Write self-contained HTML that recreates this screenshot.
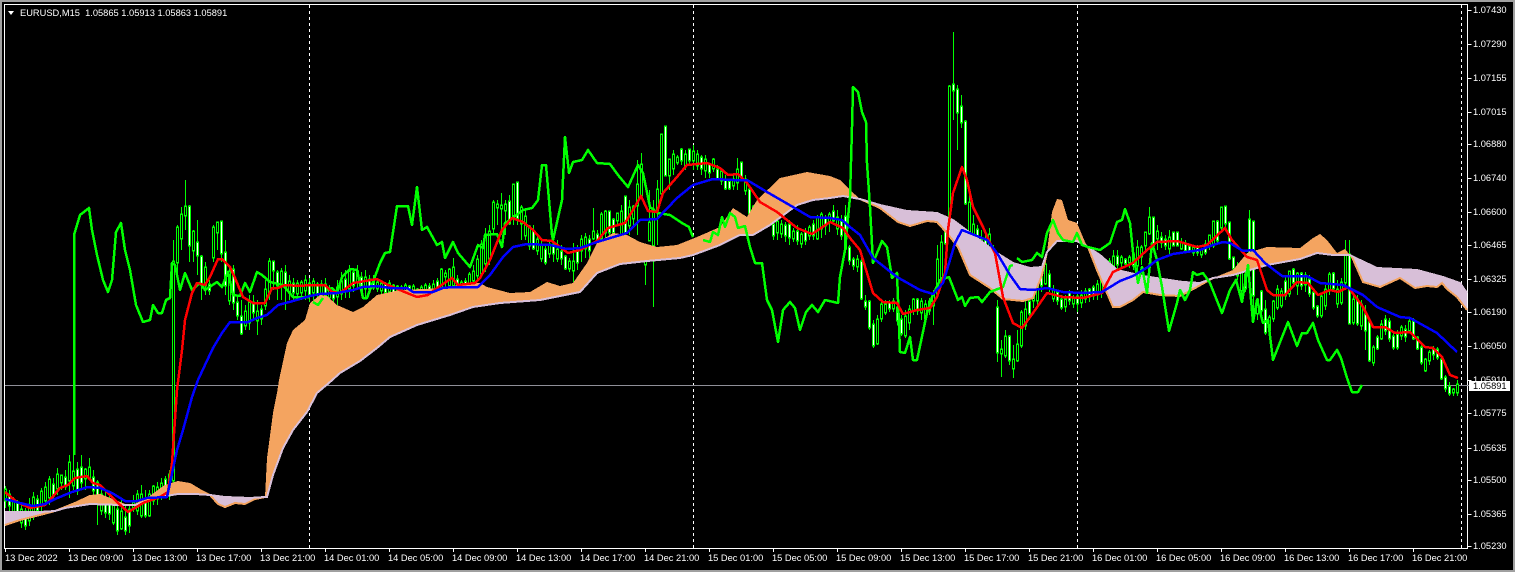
<!DOCTYPE html>
<html><head><meta charset="utf-8"><title>EURUSD,M15</title>
<style>html,body{margin:0;padding:0;background:#a0a0a0;width:1515px;height:572px;overflow:hidden}svg{display:block}text{font-family:"Liberation Sans",sans-serif;font-size:9.3px;fill:#fff}</style></head><body>
<svg width="1515" height="572" viewBox="0 0 1515 572" xmlns="http://www.w3.org/2000/svg">
<rect x="2" y="2" width="1511" height="568" fill="#000"/>
<rect x="4.5" y="4.5" width="1463" height="544" fill="none" stroke="#fff"/>
<g stroke="#fff" stroke-dasharray="3 3" shape-rendering="crispEdges"><path d="M309.5 5V548M693.5 5V548M1077.5 5V548M1461.5 5V548"/></g>
<path d="M5 385.5H1467" stroke="#8f8f98" shape-rendering="crispEdges"/>
<defs>
<path id="w" d="M9 495V505M17 504V515M25 512V525M37 500V510M53 485V495M65 478V486M77 470V490M81 468V482M93 478V490M97 483V495M105 500V512M109 505V513M117 510V530M125 518V530M129 510V525M145 500V515M165 480V492M189 207V245M197 243V255M201 257V283M209 285V290M221 222V253M225 253V285M233 270V302M237 303V315M241 317V333M253 303V312M261 310V318M273 262V270M277 273V285M285 273V287M293 284V292M309 284V294M317 285V293M325 285V295M333 292V298M345 280V290M353 273V285M361 278V290M369 280V288M373 280V287M385 285V292M393 286V292M401 288V292M409 287V290M417 290V294M429 287V292M437 282V288M457 280V288M465 282V287M509 202V223M517 183V218M533 232V248M545 250V262M553 245V253M561 252V258M565 257V268M577 250V262M589 240V250M597 235V240M609 212V232M613 220V232M625 197V232M665 127V175M681 150V160M689 150V160M701 158V168M709 165V172M717 170V178M725 180V188M729 182V188M741 163V177M749 190V213M773 225V235M785 226V235M789 225V237M797 232V240M805 232V240M813 225V235M825 218V225M833 212V220M841 222V235M845 217V248M849 248V260M853 260V265M861 262V298M865 302V306M869 302V327M873 325V345M889 303V308M897 308V320M901 320V333M917 300V310M929 302V310M945 232V243M953 85V90M957 90V112M961 107V122M965 122V203M977 230V245M985 240V252M993 250V265M997 308V352M1009 337V360M1029 302V313M1041 278V285M1049 275V287M1057 293V300M1061 300V307M1069 293V300M1077 297V303M1089 290V296M1093 288V295M1117 257V264M1125 260V263M1133 255V265M1153 218V245M1161 238V242M1165 240V245M1173 233V245M1177 233V245M1185 245V250M1189 247V250M1197 248V252M1205 245V252M1217 222V240M1225 207V223M1229 223V258M1233 258V268M1245 275V288M1249 220V270M1253 222V295M1261 292V310M1265 310V332M1285 282V295M1293 270V282M1301 274V285M1309 280V293M1313 293V307M1317 307V315M1333 274V288M1349 255V323M1357 300V323M1365 315V330M1369 323V360M1377 338V348M1385 320V330M1389 322V338M1393 337V347M1397 335V347M1405 330V336M1413 322V338M1417 338V348M1421 348V362M1433 350V354M1437 350V357M1441 360V378M1445 378V388M1449 387V393"/>
<path id="k" d="M5 490V500M13 500V512M21 510V522M29 506V520M33 498V512M41 492V505M45 488V500M49 480V497M57 475V488M61 476V482M69 463V480M73 472V485M85 470V478M89 468V478M101 495V510M113 503V522M121 512V528M133 503V507M137 495V510M141 495V515M149 495V515M153 487V500M157 488V498M161 484V495M169 475V495M173 262V480M177 228V262M181 215V238M185 207V215M193 232V250M205 268V285M213 228V257M217 223V232M229 272V300M245 312V325M249 303V322M257 312V320M265 290V305M269 262V293M281 272V285M289 282V292M297 284V293M301 283V292M305 281V290M313 282V292M321 285V295M329 290V297M337 288V296M341 282V293M349 272V288M357 272V282M365 278V288M377 283V288M381 284V290M389 284V291M397 287V293M405 286V291M413 287V291M421 288V293M425 286V291M433 285V290M441 270V287M445 274V276M449 270V285M453 268V285M461 283V288M469 275V285M473 272V280M477 260V275M481 245V273M485 235V263M489 232V258M493 203V228M497 205V207M501 206V208M505 205V210M513 185V215M521 208V223M525 217V235M529 227V245M537 240V250M541 245V258M549 245V253M557 250V258M569 262V268M573 262V270M581 240V250M585 238V248M593 232V238M601 215V238M605 212V232M617 214V220M621 212V235M629 208V225M633 207V218M637 185V205M641 165V195M645 262V264M649 223V240M653 210V245M657 190V210M661 135V193M669 160V175M673 155V168M677 158V162M685 155V165M693 152V160M697 155V165M705 160V170M713 160V168M721 172V180M733 180V185M737 170V182M745 180V190M753 207V212M777 222V232M781 225V233M793 232V238M801 235V243M809 228V235M817 218V238M821 215V228M829 215V222M837 218V228M857 260V266M877 320V343M881 305V318M885 305V312M893 302V308M905 317V335M909 310V322M913 300V310M921 302V312M925 305V318M933 295V305M937 260V293M941 243V277M949 87V230M969 203V237M973 225V260M981 240V255M989 235V248M1001 350V353M1005 337V355M1013 360V368M1017 345V360M1021 313V345M1025 310V325M1033 293V300M1037 283V300M1045 265V283M1053 290V298M1065 300V306M1073 298V303M1081 296V302M1085 292V298M1097 285V294M1101 280V292M1105 270V285M1109 262V276M1113 257V265M1121 258V262M1129 258V262M1137 248V265M1141 248V256M1145 233V245M1149 218V233M1157 232V238M1169 238V248M1181 243V248M1193 248V252M1201 250V254M1209 236V245M1213 222V245M1221 208V227M1237 268V275M1241 272V290M1257 300V313M1269 318V330M1273 302V318M1277 290V307M1281 292V305M1289 272V293M1297 274V285M1305 276V284M1321 297V315M1325 290V305M1329 275V290M1337 290V303M1341 283V302M1345 255V282M1353 300V322M1361 305V325M1373 348V362M1381 325V338M1401 328V335M1409 322V330M1425 360V370M1429 353V360M1453 390V392M1457 385V392"/>
</defs>
<g transform="translate(.5 0)" shape-rendering="crispEdges" fill="none">
<path stroke="#0f0" stroke-width="1" d="M5 486V508M9 490V512M13 497V517M17 500V522M21 505V528M25 508V530M29 498V526M33 492V520M37 495V515M41 488V512M45 482V505M49 476V505M53 478V500M57 468V495M61 475V490M65 470V490M69 455V498M73 452V490M77 462V495M81 455V488M85 468V490M89 458V480M93 470V500M97 480V525M101 485V515M105 490V518M109 495V520M113 497V525M117 503V535M121 500V530M125 505V535M129 505V533M133 495V512M137 490V515M141 485V518M145 490V518M149 490V517M153 485V505M157 482V505M161 478V500M165 476V496M169 470V500M173 240V495M177 225V280M181 207V250M185 180V230M189 205V262M193 230V262M197 220V275M201 255V300M205 262V295M209 280V295M213 225V262M217 222V250M221 222V262M225 240V295M229 265V305M233 265V310M237 295V320M241 300V335M245 305V330M249 295V330M253 295V320M257 300V335M261 305V325M265 280V310M269 258V300M273 262V290M277 270V300M281 268V300M285 265V310M289 275V300M293 278V302M297 280V298M301 280V300M305 275V300M309 278V302M313 278V300M317 282V298M321 280V300M325 278V305M329 285V305M333 288V310M337 280V305M341 272V300M345 270V298M349 265V298M353 268V292M357 265V290M361 272V295M365 270V298M369 275V292M373 275V290M377 278V292M381 280V296M385 282V298M389 280V296M393 284V298M397 285V297M401 285V296M405 283V296M409 285V295M413 284V296M417 288V298M421 285V298M425 283V295M429 283V296M433 280V292M437 278V295M441 268V292M445 270V292M449 268V295M453 258V290M457 275V292M461 280V292M465 278V290M469 272V288M473 265V285M477 255V282M481 240V275M485 228V272M489 225V265M493 200V235M497 200V225M501 193V235M505 200V235M509 195V225M513 185V225M517 183V225M521 205V240M525 210V240M529 225V250M533 225V250M537 235V255M541 240V262M545 245V265M549 240V258M553 240V262M557 240V262M561 245V265M565 255V270M569 258V272M573 243V282M577 245V270M581 235V262M585 233V258M589 235V258M593 208V240M597 230V250M601 212V250M605 210V238M609 212V240M613 218V240M617 213V225M621 205V240M625 197V240M629 200V235M633 205V225M637 160V235M641 153V197M645 262V285M649 190V240M653 200V307M657 180V245M661 135V195M665 127V175M669 160V190M673 150V175M677 155V165M681 148V165M685 150V170M689 150V165M693 145V170M697 150V170M701 155V175M705 155V178M709 163V178M713 158V172M717 165V180M721 170V185M725 175V190M729 180V190M733 175V190M737 158V190M741 162V180M745 175V195M749 185V215M753 205V215M773 220V240M777 218V240M781 220V238M785 222V242M789 220V245M793 228V242M797 225V245M801 232V248M805 228V245M809 225V240M813 220V240M817 215V240M821 212V238M825 215V235M829 212V232M833 205V222M837 210V235M841 215V240M845 205V250M849 245V265M853 257V270M857 255V272M861 258V300M865 295V310M869 300V330M873 320V348M877 315V345M881 300V322M885 300V315M889 300V312M893 298V312M897 305V325M901 315V336M905 310V338M909 305V330M913 298V315M917 298V315M921 298V320M925 300V325M929 298V315M933 290V325M937 245V295M941 235V280M945 222V245M949 85V230M953 32V120M957 85V150M961 95V128M965 120V205M969 195V240M973 215V275M977 225V255M981 230V265M985 235V260M989 228V260M993 245V270M997 300V362M1001 340V377M1005 330V358M1009 335V365M1013 345V378M1017 330V362M1021 310V348M1025 300V330M1029 295V320M1033 290V308M1037 280V305M1041 275V292M1045 262V285M1049 270V292M1053 285V302M1057 290V305M1061 295V310M1065 295V312M1069 290V305M1073 295V308M1077 292V312M1081 290V308M1085 288V303M1089 288V302M1093 285V300M1097 280V300M1101 275V298M1105 265V290M1109 258V282M1113 250V272M1117 250V270M1121 255V268M1125 258V266M1129 255V268M1133 250V270M1137 240V282M1141 245V265M1145 232V250M1149 207V235M1153 218V245M1157 225V250M1161 232V248M1165 235V250M1169 230V255M1173 232V246M1177 232V246M1181 238V250M1185 240V252M1189 245V252M1193 245V256M1197 245V256M1201 248V258M1205 240V255M1209 235V250M1213 222V248M1217 220V245M1221 208V232M1225 207V228M1229 222V260M1233 258V272M1237 262V280M1241 270V300M1245 272V292M1249 210V272M1253 222V320M1257 298V320M1261 290V315M1265 300V335M1269 315V335M1273 300V322M1277 285V310M1281 288V308M1285 275V300M1289 272V297M1293 268V285M1297 272V295M1301 272V290M1305 272V292M1309 275V297M1313 290V310M1317 305V318M1321 295V318M1325 285V310M1329 272V295M1333 272V290M1337 280V308M1341 278V305M1345 240V290M1349 240V323M1353 295V325M1357 295V326M1361 300V330M1365 305V350M1369 318V362M1373 345V366M1377 335V350M1381 320V340M1385 315V335M1389 318V342M1393 332V350M1397 330V350M1401 325V340M1405 325V342M1409 318V332M1413 318V340M1417 336V350M1421 345V365M1425 358V372M1429 350V365M1433 346V360M1437 347V360M1441 358V380M1445 375V392M1449 382V396M1453 388V396M1457 380V396"/>
<use href="#w" stroke="#0f0" stroke-width="3" stroke-linecap="square"/>
<use href="#k" stroke="#0f0" stroke-width="3" stroke-linecap="square"/>
<use href="#w" stroke="#fff" stroke-width="1"/>
<use href="#k" stroke="#000" stroke-width="1"/>
</g>
<g shape-rendering="crispEdges">
<g fill="#D8BFD8">
<polygon points="5,512 40,512 55,511 40,515 20,520 5,525"/>
<polygon points="210,495 225,497 250,498 265,497 255,499 245,504 235,503 225,507 218,504"/>
<polygon points="860,199 880,205 907,211 937,213 953,220 973,235 997,253 1013,263 1030,268 1042,267 1047,252 1042,275 1033,298 1023,301 1003,299 990,288 970,275 958,247 947,233 937,222 927,221 910,226 898,222 880,208"/>
<polygon points="1088,247 1100,255 1117,270 1143,276 1183,282 1200,283 1213,278 1197,287 1180,296 1160,295 1143,292 1133,300 1120,307 1113,307 1097,270"/>
<polygon points="1350,255 1360,260 1377,268 1417,270 1443,277 1460,283 1467,293 1467,310 1457,297 1447,289 1442,283 1437,287 1427,286 1415,288 1400,278 1380,287 1363,282 1352,257"/>
</g>
<g fill="#F4A460">
<polygon points="55,511 65,507 75,503 90,496 100,495 110,499 125,505 135,505 120,505 90,504 65,508"/>
<polygon points="135,505 150,497 165,486 178,482 190,484 200,490 210,495 195,494 178,494 160,497"/>
<polygon points="265,497 267,458 273,413 277,393 279,380 287,343 293,330 305,320 310,303 320,295 327,296 337,305 353,312 363,307 377,295 400,290 423,289 443,288 470,283 480,283 487,287 510,293 530,292 547,282 560,286 573,283 587,263 597,243 613,233 627,235 640,242 657,247 677,245 697,237 720,227 733,208 747,217 757,200 780,178 807,172 830,176 840,180 850,190 860,199 843,196 830,198 813,200 797,205 770,225 753,235 740,235 720,245 693,255 680,258 647,261 620,264 597,273 580,292 540,300 500,303 473,307 450,315 417,325 390,337 377,348 360,361 340,373 330,382 317,393 307,412 293,430 283,448 273,475 267,497"/>
<polygon points="1047,252 1052,212 1057,199 1062,200 1068,220 1077,223 1085,242 1088,247 1077,241 1057,241"/>
<polygon points="1213,278 1233,270 1247,253 1267,247 1300,248 1313,238 1320,234 1327,240 1337,253 1345,249 1350,255 1333,255 1317,253 1300,259 1267,265 1233,275"/>
</g>
<g fill="none" stroke-width="2">
<polyline stroke="#F4A460" points="5,525 20,520 40,515 55,511 65,507 75,503 90,496 100,495 110,499 125,505 135,505 150,497 165,486 178,482 190,484 200,490 210,495 218,504 225,507 235,503 245,504 255,499 265,497"/>
<polyline stroke="#F4A460" points="860,199 880,208 898,222 910,226 927,221 937,222 947,233 958,247 970,275 990,288 1003,299 1023,301 1033,298 1042,275 1047,252"/>
<polyline stroke="#F4A460" points="1088,247 1097,270 1113,307 1120,307 1133,300 1143,292 1160,295 1180,296 1197,287 1213,278"/>
<polyline stroke="#F4A460" points="1350,255 1352,257 1363,282 1380,287 1400,278 1415,288 1427,286 1437,287 1442,283 1447,289 1457,297 1467,310"/>
<polyline stroke="#D8BFD8" points="5,512 40,512 55,511 65,508 90,504 120,505 135,505 160,497 178,494 195,494 210,495 225,497 250,498 265,497 267,497 273,475 283,448 293,430 307,412 317,393 330,382 340,373 360,361 377,348 390,337 417,325 450,315 473,307 500,303 540,300 580,292 597,273 620,264 647,261 680,258 693,255 720,245 740,235 753,235 770,225 797,205 813,200 830,198 843,196 860,199 880,205 907,211 937,213 953,220 973,235 997,253 1013,263 1030,268 1042,267 1047,252 1057,241 1077,241 1088,247 1100,255 1117,270 1143,276 1183,282 1200,283 1213,278 1233,275 1267,265 1300,259 1317,253 1333,255 1350,255 1360,260 1377,268 1417,270 1443,277 1460,283 1467,293"/>
</g>
<g fill="none" stroke-width="2.5" stroke-linejoin="round">
<polyline stroke="#0f0" points="74,455 74,235 80,215 89,208 92,230 97,255 103,280 108,292 112,280 116,232 121,223 125,250 130,270 136,305 143,322 150,320 153,305 158,313 162,313 166,300 170,298 172,263 175,265 180,290 185,273 192,290 200,283 205,290 217,282 222,287 228,272 233,295 240,296 245,283 250,292 257,272 262,275 270,282 283,285 293,297 310,297"/>
<polyline stroke="#0f0" points="313,302 318,305 323,298"/>
<polyline stroke="#0f0" points="327,290 332,288 337,293 342,277 350,269 357,270 363,298 367,298 380,263 385,253 390,252 397,206 408,206 412,225 417,187 422,230 427,227 437,245 442,242 445,258 453,242 458,253 470,267 478,245 483,248 485,235 497,234 502,247 505,223 510,220 523,210 532,208 538,200 542,165 546,165 552,235 553,240 562,200 565,137 569,173 573,162 582,160 588,150 597,163 610,164 618,175 628,187 638,165 643,173 650,207 658,213 670,215 682,223 689,227 693,237"/>
<polyline stroke="#0f0" points="703,240 710,242 713,232 718,235 722,217 725,227 730,213 735,217 738,228 745,226 750,247 755,263 762,263 767,300 772,310 778,342 783,310 790,302 795,308 800,330 806,312 812,305 818,312 825,300 838,303 840,277 845,250 850,197 852,127 853,87 858,92 862,112 866,122 867,163 870,207 873,263 882,241 887,247 892,278 897,273 900,352 905,353 910,337 913,360 917,360 927,313 932,297 940,280 949,277 958,300 962,297 965,306 970,298 978,297 982,302 990,292 1003,287 1010,266 1013,265"/>
<polyline stroke="#0f0" points="1017,258 1022,262 1032,260 1037,253 1042,257 1047,233 1053,220 1058,233 1063,240 1073,242 1077,233 1082,245 1088,247 1100,250 1110,243 1117,222 1122,220 1125,209 1130,223 1133,252 1138,283 1142,267 1147,293 1152,243 1157,260 1162,287 1169,331 1177,303 1180,290 1185,300 1190,290 1193,272 1197,275 1203,273 1210,283 1222,313 1230,290 1236,280 1242,302 1248,265 1253,322 1257,300 1263,323 1268,320 1273,360 1288,322 1297,346 1302,333 1307,333 1313,323 1318,340 1327,360 1330,360 1337,350 1341,358 1347,378 1352,392 1358,392 1362,385"/>
<polyline stroke="#f00" points="5,492 17,502 30,508 45,505 50,500 60,488 68,485 75,478 87,476 93,483 100,485 110,495 118,503 128,512 135,508 143,503 160,497 168,492 172,463 177,390 182,350 185,320 192,293 197,283 205,285 210,277 218,259 222,259 230,267 235,278 243,297 253,303 265,303 272,288 278,288 285,285 300,286 310,285 325,285 332,292 340,293 353,283 377,279 388,285 407,293 417,297 428,295 437,288 452,278 458,285 475,283 480,278 490,260 502,230 512,218 523,222 533,230 542,240 552,241 568,253 580,250 597,241 608,228 625,223 633,210 641,196 648,211 657,212 663,193 677,177 687,165 707,163 720,168 728,175 738,174 747,183 760,202 777,212 797,228 812,234 830,222 843,228 850,238 860,250 867,273 873,293 883,302 897,303 903,314 917,310 930,308 937,297 945,273 948,230 953,193 962,167 967,180 973,207 983,227 990,243 995,253 1003,297 1013,323 1022,328 1033,313 1047,293 1063,297 1083,298 1102,293 1107,283 1113,272 1133,263 1147,250 1157,242 1177,241 1197,247 1207,245 1225,228 1232,240 1247,257 1257,260 1267,290 1273,295 1285,295 1297,282 1308,283 1318,295 1330,290 1338,292 1348,287 1363,307 1373,327 1385,327 1395,333 1410,332 1425,347 1433,348 1442,357 1450,375 1458,378"/>
<polyline stroke="#00f" points="5,499 20,503 33,506 45,504 55,499 72,492 88,487 100,488 112,493 125,501 137,501 147,498 167,497 170,483 177,450 183,430 192,397 198,380 205,365 213,348 222,333 230,322 248,322 257,318 267,315 278,305 293,301 310,296 320,294 337,293 353,290 363,287 377,286 390,288 407,288 413,292 433,292 443,288 453,287 478,287 483,282 490,275 503,257 513,247 527,244 550,245 567,249 580,248 597,242 627,233 640,220 657,219 677,198 693,185 713,179 733,180 747,180 767,192 793,207 810,217 830,218 842,220 850,227 860,235 873,258 897,277 920,290 933,294 943,283 950,260 955,243 962,230 987,240 997,253 1010,275 1020,289 1033,290 1047,288 1063,292 1083,293 1102,292 1120,281 1133,276 1148,267 1157,260 1173,254 1200,250 1213,245 1223,242 1230,243 1243,251 1253,250 1265,263 1282,276 1307,276 1320,283 1343,285 1363,295 1377,307 1400,317 1410,318 1437,333 1457,352"/>
</g>
</g>
<path d="M1467.5 10.5h4M1467.5 44.5h4M1467.5 78.5h4M1467.5 112.5h4M1467.5 144.5h4M1467.5 178.5h4M1467.5 212.5h4M1467.5 245.5h4M1467.5 279.5h4M1467.5 312.5h4M1467.5 346.5h4M1467.5 380.5h4M1467.5 413.5h4M1467.5 448.5h4M1467.5 480.5h4M1467.5 514.5h4M1467.5 546.5h4M5.5 548v4M69.5 548v4M133.5 548v4M197.5 548v4M261.5 548v4M325.5 548v4M389.5 548v4M453.5 548v4M517.5 548v4M581.5 548v4M645.5 548v4M709.5 548v4M773.5 548v4M837.5 548v4M901.5 548v4M965.5 548v4M1029.5 548v4M1093.5 548v4M1157.5 548v4M1221.5 548v4M1285.5 548v4M1349.5 548v4M1413.5 548v4" stroke="#fff" fill="none" shape-rendering="crispEdges"/>
<path d="M8 11H14L11 15Z" fill="#fff"/>
<text x="20" y="16" xml:space="preserve">EURUSD,M15  1.05865 1.05913 1.05863 1.05891</text>
<g>
<text x="1473" y="13">1.07430</text><text x="1473" y="47">1.07290</text><text x="1473" y="81">1.07155</text><text x="1473" y="115">1.07015</text><text x="1473" y="147">1.06880</text><text x="1473" y="181">1.06740</text><text x="1473" y="215">1.06600</text><text x="1473" y="248">1.06465</text><text x="1473" y="282">1.06325</text><text x="1473" y="315">1.06190</text><text x="1473" y="349">1.06050</text><text x="1473" y="383">1.05910</text><text x="1473" y="416">1.05775</text><text x="1473" y="451">1.05635</text><text x="1473" y="483">1.05500</text><text x="1473" y="517">1.05365</text><text x="1473" y="549">1.05230</text>
</g>
<path d="M1467 385.5H1470" stroke="#8f8f98" shape-rendering="crispEdges"/>
<rect x="1469" y="381" width="41" height="10" fill="#fff"/>
<text x="1473" y="389" style="fill:#000">1.05891</text>
<g>
<text x="5" y="561">13 Dec 2022</text><text x="68" y="561">13 Dec 09:00</text><text x="132" y="561">13 Dec 13:00</text><text x="196" y="561">13 Dec 17:00</text><text x="260" y="561">13 Dec 21:00</text><text x="324" y="561">14 Dec 01:00</text><text x="388" y="561">14 Dec 05:00</text><text x="452" y="561">14 Dec 09:00</text><text x="516" y="561">14 Dec 13:00</text><text x="580" y="561">14 Dec 17:00</text><text x="644" y="561">14 Dec 21:00</text><text x="708" y="561">15 Dec 01:00</text><text x="772" y="561">15 Dec 05:00</text><text x="836" y="561">15 Dec 09:00</text><text x="900" y="561">15 Dec 13:00</text><text x="964" y="561">15 Dec 17:00</text><text x="1028" y="561">15 Dec 21:00</text><text x="1092" y="561">16 Dec 01:00</text><text x="1156" y="561">16 Dec 05:00</text><text x="1220" y="561">16 Dec 09:00</text><text x="1284" y="561">16 Dec 13:00</text><text x="1348" y="561">16 Dec 17:00</text><text x="1412" y="561">16 Dec 21:00</text>
</g>
</svg>
</body></html>
